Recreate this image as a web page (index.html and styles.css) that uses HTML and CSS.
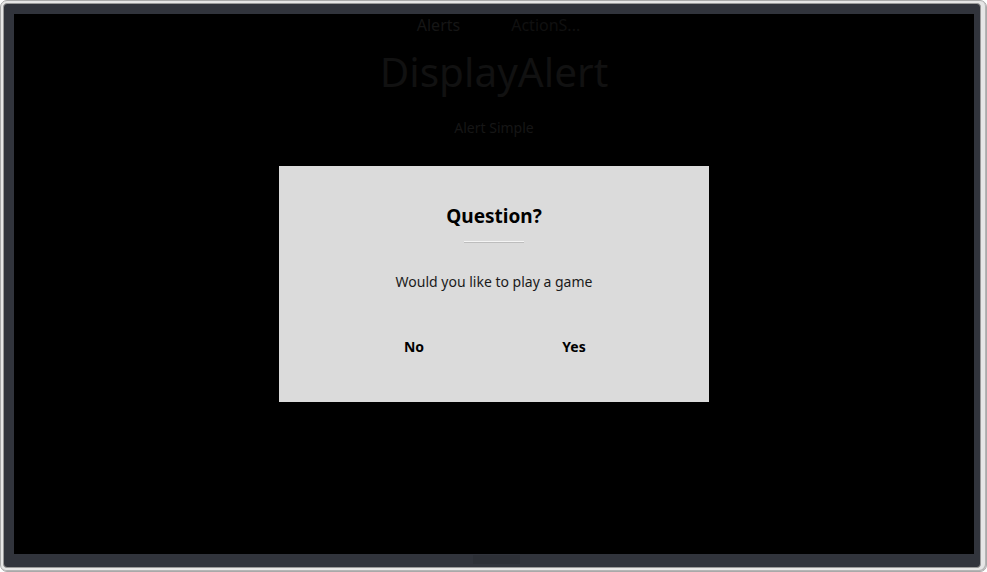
FILE: index.html
```html
<!DOCTYPE html>
<html lang="en">
<head>
<meta charset="utf-8">
<title>DisplayAlert</title>
<link rel="stylesheet" href="styles.css">
</head>
<body>
<div class="device">
  <div class="bezel">
    <div class="screen">
      <div class="tabs">
        <span class="tab">Alerts</span>
        <span class="tab tab-clip">ActionS...</span>
      </div>
      <h1 class="page-title">DisplayAlert</h1>
      <p class="page-sub">Alert Simple</p>
      <div class="dialog">
        <h2 class="dialog-title">Question?</h2>
        <div class="dialog-rule"></div>
        <p class="dialog-msg">Would you like to play a game</p>
        <div class="dialog-actions">
          <span class="dialog-btn">No</span>
          <span class="dialog-btn">Yes</span>
        </div>
      </div>
    </div>
    <div class="home-key"></div>
  </div>
</div>
</body>
</html>
```

FILE: styles.css
```css
html, body {
  margin: 0;
  padding: 0;
  background: #ffffff;
  height: 100%;
}

body {
  font-family: "Noto Sans", "Open Sans", sans-serif;
}

.device {
  box-sizing: border-box;
  width: 987px;
  height: 572px;
  border: 1px solid #a9a9a9;
  border-radius: 7px;
  background: #e6e6e6;
  padding: 2px 5px 3px 2px;
  box-shadow: inset -1px -1px 0 #b5b5b5;
}

.bezel {
  position: relative;
  box-sizing: border-box;
  height: 100%;
  background: #31343c;
  border: 1px solid #9a9a9a;
  border-radius: 4px;
  padding: 10px 6px 13px 10px;
}

.screen {
  position: relative;
  width: 960px;
  height: 540px;
  background: #000000;
  display: flex;
  flex-direction: column;
  align-items: center;
  overflow: hidden;
}

.tabs {
  display: flex;
  gap: 51px;
  margin-top: 0;
  height: 22px;
  align-items: center;
  font-size: 16px;
  color: #161616;
  margin-left: 9px;
}

.tab-clip {
  color: #101010;
}

.page-title {
  margin: 8px 0 0 0;
  font-weight: 400;
  font-size: 40.5px;
  line-height: 56px;
  color: #111111;
}

.page-sub {
  margin: 18px 0 0 0;
  font-size: 14px;
  color: #161616;
}

.dialog {
  position: absolute;
  left: 265px;
  top: 152px;
  width: 430px;
  height: 236px;
  background: #dbdbdb;
  display: flex;
  flex-direction: column;
  align-items: center;
}

.dialog-title {
  margin: 37px 0 0 0;
  font-size: 19px;
  line-height: 26px;
  font-weight: 700;
  color: #000000;
}

.dialog-rule {
  margin-top: 12px;
  width: 60px;
  height: 1px;
  background: #f4f4f4;
  box-shadow: 0 1px 0 #bdbdbd;
}

.dialog-msg {
  margin: 30px 0 0 0;
  font-size: 14px;
  line-height: 20px;
  color: #1a1a1a;
}

.dialog-actions {
  display: flex;
  width: 100%;
  justify-content: center;
  margin-top: 45px;
}

.dialog-btn {
  width: 160px;
  text-align: center;
  font-size: 14px;
  font-weight: 700;
  color: #000000;
}

.home-key {
  position: absolute;
  left: 469px;
  bottom: 3px;
  width: 47px;
  height: 9px;
  background: #2d3037;
}
```
